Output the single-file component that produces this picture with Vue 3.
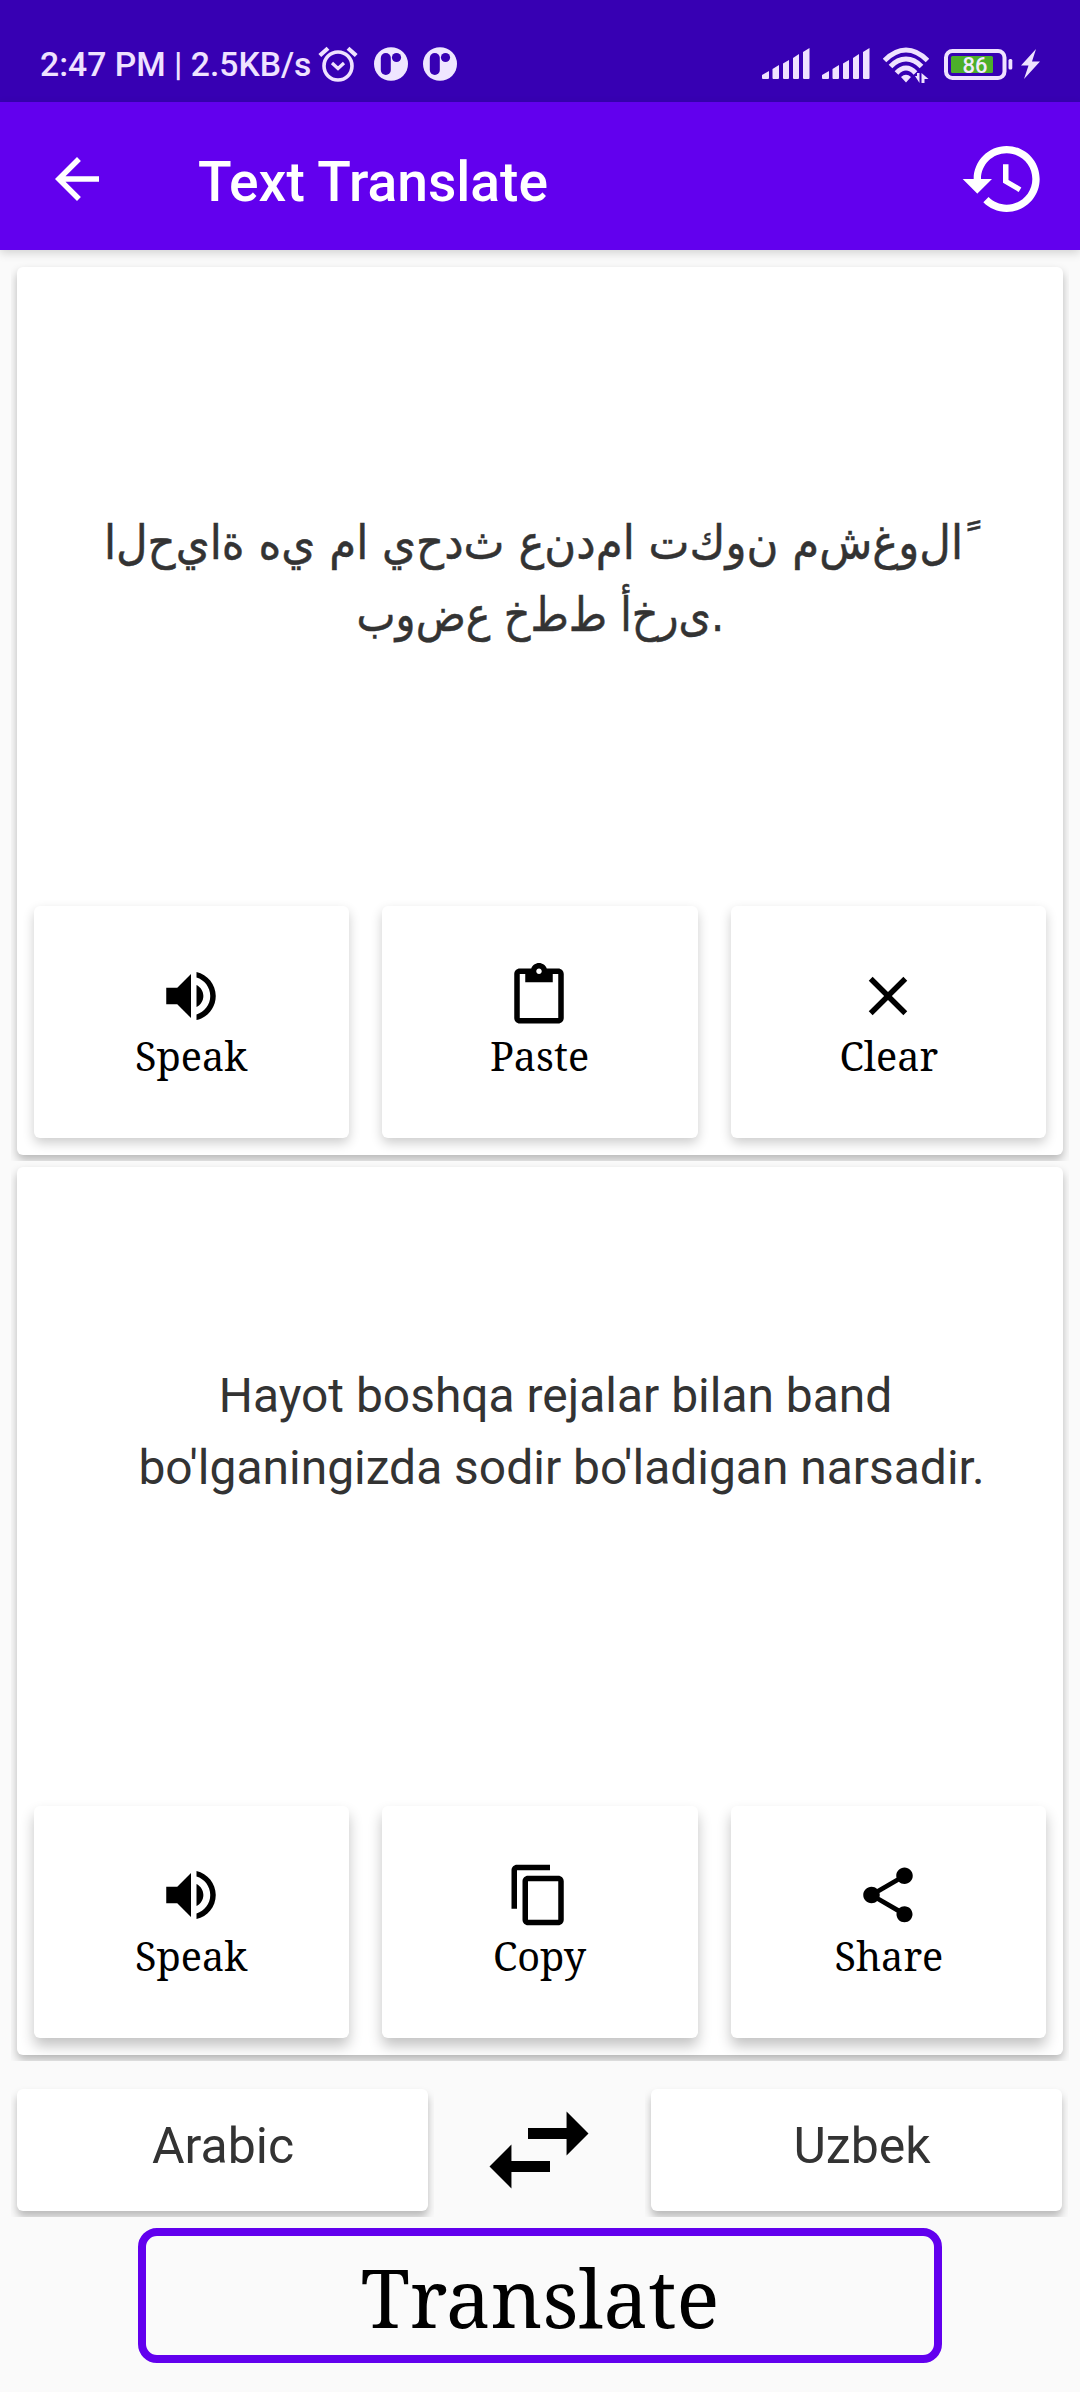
<script setup>
const icons = {
  speak: 'M3 9v6h4l5 5V4L7 9H3zm13.5 3c0-1.77-1.02-3.29-2.5-4.03v8.05c1.48-.73 2.5-2.25 2.5-4.02zM14 3.23v2.06c2.89.86 5 3.54 5 6.71s-2.11 5.85-5 6.71v2.06c4.01-.91 7-4.49 7-8.77s-2.99-7.86-7-8.77z',
  paste: 'M19 2h-4.18C14.4.84 13.3 0 12 0c-1.3 0-2.4.84-2.82 2H5c-1.1 0-2 .9-2 2v16c0 1.1.9 2 2 2h14c1.1 0 2-.9 2-2V4c0-1.1-.9-2-2-2zm-7 0c.55 0 1 .45 1 1s-.45 1-1 1-1-.45-1-1 .45-1 1-1zm7 18H5V4h2v3h10V4h2v16z',
  clear: 'M19 6.41L17.59 5 12 10.59 6.41 5 5 6.41 10.59 12 5 17.59 6.41 19 12 13.41 17.59 19 19 17.59 13.41 12z',
  copy: 'M16 1H4c-1.1 0-2 .9-2 2v14h2V3h12V1zm3 4H8c-1.1 0-2 .9-2 2v14c0 1.1.9 2 2 2h11c1.1 0 2-.9 2-2V7c0-1.1-.9-2-2-2zm0 16H8V7h11v14z',
  share: 'M18 16.08c-.76 0-1.44.3-1.96.77L8.91 12.7c.05-.23.09-.46.09-.7s-.04-.47-.09-.7l7.05-4.11c.54.5 1.25.81 2.04.81 1.66 0 3-1.34 3-3s-1.34-3-3-3-3 1.34-3 3c0 .24.04.47.09.7L8.04 9.81C7.5 9.31 6.79 9 6 9c-1.66 0-3 1.34-3 3s1.34 3 3 3c.79 0 1.5-.31 2.04-.81l7.12 4.16c-.05.21-.08.43-.08.65 0 1.61 1.31 2.92 2.92 2.92 1.61 0 2.92-1.31 2.92-2.92s-1.31-2.92-2.92-2.92z',
}
const sourceActions = [
  { label: 'Speak', icon: icons.speak },
  { label: 'Paste', icon: icons.paste },
  { label: 'Clear', icon: icons.clear },
]
const targetActions = [
  { label: 'Speak', icon: icons.speak },
  { label: 'Copy', icon: icons.copy },
  { label: 'Share', icon: icons.share },
]
// Letters are kept in isolated form by a zero-width non-joiner after each one.
const isolate = (s) => s.replace(/([\u0620-\u064a])(?=[\u0620-\u064a])/g, '$1\u200c')
const sourceLines = ['الحياة هي ما يحدث عندما تكون مشغولا\u00a0ً', 'بوضع خطط أخرى.'].map(isolate)
</script>

<template>
  <div class="screen">
    <div class="status">
      <span class="clock">2:47 PM | 2.5KB/s</span>
      <svg class="alarm" viewBox="0 0 40 36" fill="none" stroke="#efe2ff">
        <circle cx="20" cy="20" r="14" stroke-width="3.6" />
        <path d="M14 17l6 5.5 6-5.5" stroke-width="3.2" />
        <path d="M1.8 9.5L10 2.2M38.2 9.5L30 2.2" stroke-width="4.2" />
      </svg>
      <svg v-for="n in 2" :key="n" class="pbadge" viewBox="0 0 34 34">
        <ellipse cx="17" cy="17" rx="17" ry="16.8" fill="#efe6ff" />
        <rect x="6.8" y="6" width="10" height="22" rx="5" fill="#3700b3" />
        <circle cx="22.5" cy="10.5" r="4.6" fill="#3700b3" />
      </svg>
      <div class="grow"></div>
      <svg v-for="n in 2" :key="'s' + n" class="signal" viewBox="0 0 48 32" fill="#efe2ff">
        <path d="M0 27l7-4v7q0 1-1 1H1q-1 0-1-1zM10.5 21l6.500-4v13q0 1-1 1h-4.500q-1 0-1-1zM21 15.500l6-3.500v18q0 1-1 1h-4q-1 0-1-1zM31 10l6-4v24q0 1-1 1h-4q-1 0-1-1zM41 4l6.500-4v30q0 1-1 1h-4.500q-1 0-1-1z" />
      </svg>
      <svg class="wifi" viewBox="0 0 46 36">
        <g fill="none" stroke="#efe2ff" stroke-width="5">
          <path d="M1.500 13.500Q12 3 23 3t21.500 10.500" />
          <path d="M7.500 19.500Q14.500 12 23 12t15.500 7.500" />
          <path d="M13.500 26Q18 21 23 21t9.500 5" />
        </g>
        <path d="M18 30q5-4.500 10 0l-5 5.500zM32 29h2v-3h2.500v10zM38.500 36V26l7 6h-4v4z" fill="#efe2ff" />
      </svg>
      <svg class="battery" viewBox="0 0 70 31">
        <rect x="2" y="2" width="58.500" height="27" rx="6.500" fill="none" stroke="#efe2ff" stroke-width="4" />
        <rect x="7" y="7" width="42" height="17" rx="1.500" fill="#4caf2a" />
        <rect x="64.500" y="10" width="3.800" height="10.500" rx="1.500" fill="#efe2ff" />
        <text x="31" y="24" text-anchor="middle" class="pct">86</text>
      </svg>
      <svg class="bolt" viewBox="0 0 19 30"><path d="M15 0L0 16.500h7.500L3 30l16-17.500h-8z" fill="#efe2ff" /></svg>
    </div>

    <header class="appbar">
      <svg class="back" viewBox="0 0 24 24" fill="#fff"><path d="M20 11H7.830l5.590-5.590L12 4l-8 8 8 8 1.410-1.410L7.830 13H20v-2z" /></svg>
      <h1>Text Translate</h1>
      <svg class="history" viewBox="0 0 24 24" fill="#fff"><path d="M13 3c-4.970 0-9 4.030-9 9H1l3.890 3.890.07.14L9 12H6c0-3.870 3.130-7 7-7s7 3.130 7 7-3.130 7-7 7c-1.930 0-3.680-.79-4.940-2.060l-1.420 1.420C8.270 19.990 10.510 21 13 21c4.970 0 9-4.030 9-9s-4.030-9-9-9zm-1 5v5l4.280 2.540.72-1.210-3.500-2.080V8H12z" /></svg>
    </header>

    <main>
      <section class="card source">
        <p class="arabic"><span v-for="l in sourceLines" :key="l">{{ l }}</span></p>
        <div class="actions">
          <button v-for="a in sourceActions" :key="a.label">
            <svg viewBox="0 0 24 24"><path :d="a.icon" /></svg>
            <span>{{ a.label }}</span>
          </button>
        </div>
      </section>

      <section class="card target">
        <p class="uzbek"><span>Hayot boshqa rejalar bilan band&nbsp;</span><span>bo'lganingizda sodir bo'ladigan narsadir.</span></p>
        <div class="actions">
          <button v-for="a in targetActions" :key="a.label">
            <svg viewBox="0 0 24 24"><path :d="a.icon" /></svg>
            <span>{{ a.label }}</span>
          </button>
        </div>
      </section>

      <div class="langs">
        <div class="lang from">Arabic</div>
        <svg class="swap" viewBox="0 0 24 24"><path d="M6.990 11L3 15l3.990 4v-3H14v-2H6.990v-3zM21 9l-3.990-4v3H10v2h7.010v3L21 9z" /></svg>
        <div class="lang to">Uzbek</div>
      </div>

      <button class="translate"><span>Translate</span></button>
    </main>
  </div>
</template>

<style>
body { background: #fff; }
</style>

<style scoped>
* { box-sizing: border-box; }
.screen { width: 1080px; height: 2392px; background: #fafafa; font-family: Roboto, sans-serif; display: flex; flex-direction: column; }
svg { display: block; flex: none; }
.status { height: 102px; background: #3700b3; display: flex; align-items: center; padding: 26px 40px 0 40px; flex: none; }
.clock { width: 278px; padding-top: 1px; font-size: 33.700px; font-weight: 500; color: #efe2ff; white-space: nowrap; }
.alarm { width: 40px; height: 36px; }
.pbadge { width: 34px; height: 34px; margin-left: 15.500px; }
.grow { flex: 1; }
.signal { width: 48px; height: 32px; margin-right: 12px; }
.wifi { width: 46px; height: 36px; margin: 2px 15px 0 1px; }
.battery { width: 70px; height: 31px; }
.pct { font: 500 22px Roboto, sans-serif; fill: #f2eaff; }
.bolt { width: 19px; height: 30px; margin-left: 7px; }
.appbar { height: 148px; background: #6200ee; display: flex; align-items: center; padding: 5px 33px 0 44px; flex: none; box-shadow: 0 3px 9px rgba(0, 0, 0, .16); }
.back { width: 66px; height: 66px; }
h1 { margin: 6px 0 0 88px; font-size: 55.200px; font-weight: 500; color: #fff; flex: 1; line-height: 64px; }
.history { width: 88px; height: 88px; }
main { padding: 17px 17px 0; display: flex; flex-direction: column; }
.card { height: 888px; background: #fff; border-radius: 6px; box-shadow: 0 5px 10px rgba(0, 0, 0, .27); clip-path: inset(-6px); padding: 0 17px 17px; display: flex; flex-direction: column; margin-bottom: 12px; }
p { margin: 0; flex: 1; font-size: 47.950px; line-height: 72px; color: #333; display: flex; flex-direction: column; align-items: center; white-space: nowrap; }
.arabic { padding-top: 240px; direction: ltr; font-family: "DejaVu Sans", sans-serif; font-size: 47px; -webkit-text-stroke: .5px #333; }
.arabic span { unicode-bidi: bidi-override; direction: ltr; transform: scaleX(.926); }
.arabic span + span { transform: scaleX(.882); }
.uzbek { padding-top: 193px; padding-left: 43px; }
.actions { display: grid; grid-template-columns: repeat(3, 1fr); column-gap: 33px; }
.actions button { height: 232px; border: 0; border-radius: 6px; background: #fff; box-shadow: 0 5px 12px rgba(0, 0, 0, .2); padding: 57px 1px 0 0; display: flex; flex-direction: column; align-items: center; font: 39.600px/54px "Noto Serif", "DejaVu Serif Condensed", "DejaVu Serif", serif; color: #000; }
.actions svg { width: 66px; height: 66px; }
.actions button:last-child span { padding-left: 2px; }
.target button { box-shadow: 0 8px 14px rgba(0, 0, 0, .24); padding-top: 56px; }
.target button span { line-height: 56px; }
.langs { display: flex; justify-content: space-between; align-items: center; margin-top: 22px; padding-right: 1px; }
.lang { width: 411px; height: 122px; background: #fff; border-radius: 6px; box-shadow: 0 6px 9px rgba(0, 0, 0, .26); clip-path: inset(-6px); text-align: center; font-size: 50px; line-height: 114px; color: #333; }
.to { padding-left: 11px; }
.from { padding-left: 1px; }
.swap { width: 132px; height: 132px; margin: -5px 2px -5px 0; }
.translate { align-self: center; width: 804px; height: 135px; margin-top: 17px; border: 8px solid #6200ee; border-radius: 19px; background: #fafafa; font: 80px/100px "Noto Serif", "DejaVu Serif Condensed", "DejaVu Serif", serif; color: #000; padding: 2px 0 0; }
</style>
